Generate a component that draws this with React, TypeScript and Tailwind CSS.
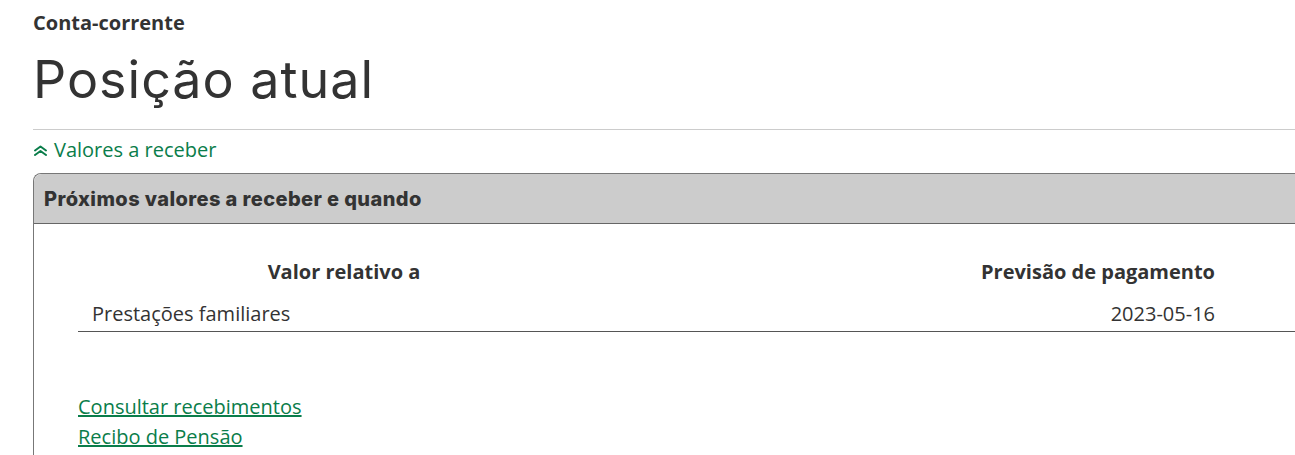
import React from 'react';

const ChevronsUpIcon: React.FC = () => (
  <svg width="15" height="11" viewBox="0 0 15 11" fill="none" stroke="currentColor" strokeWidth="2" strokeLinecap="round" strokeLinejoin="round">
    <polyline points="2,5.5 7.5,1.5 13,5.5" />
    <polyline points="2,10 7.5,6 13,10" />
  </svg>
);

const App: React.FC = () => {
  return (
    <div className="w-full h-[455px] overflow-hidden bg-white text-[#333] font-['Open_Sans',sans-serif]">
      <div className="w-[1340px] pl-[33px]">
        <p className="pt-[9px] text-[20px] leading-[27px] font-bold text-[#333]">Conta-corrente</p>
        <h1 className="mt-[13px] text-[52px] leading-[62px] font-['Inter',sans-serif] font-normal tracking-[1px] text-[#333]">
          Posição atual
        </h1>
        <div className="mt-[18px] border-t border-[#cccccc]" />
        <a href="#" className="mt-[6px] flex items-center gap-[6px] text-[20px] leading-[28px] text-[#0a7d4a]">
          <ChevronsUpIcon />
          <span>Valores a receber</span>
        </a>
        <section className="mt-[9px] rounded-tl-[8px] border-l border-t border-[#777] h-[300px]">
          <div className="h-[50px] flex items-center px-[10px] bg-[#cccccc] border-b border-[#666] rounded-tl-[8px]">
            <h2 className="text-[20px] font-extrabold font-['Inter',sans-serif] tracking-[0.4px] text-[#333]">Próximos valores a receber e quando</h2>
          </div>
          <div className="pl-[44px] pt-[34px]">
            <table className="w-[1300px] border-collapse text-[20px]">
              <thead>
                <tr>
                  <th className="w-[532px] font-bold text-center pb-[14px] leading-[28px]">Valor relativo a</th>
                  <th className="w-[619px] font-bold text-right pr-[14px] pb-[14px] leading-[28px]">Previsão de pagamento</th>
                  <th></th>
                </tr>
              </thead>
              <tbody>
                <tr className="border-b border-[#555]">
                  <td className="pl-[14px] pb-[3px] leading-[28px]">Prestações familiares</td>
                  <td className="pr-[14px] text-right pb-[3px] leading-[28px]">2023-05-16</td>
                  <td></td>
                </tr>
              </tbody>
            </table>
            <div className="mt-[60px] flex flex-col text-[20px] leading-[30px]">
              <a href="#" className="text-[#0a7d4a] underline w-fit">Consultar recebimentos</a>
              <a href="#" className="text-[#0a7d4a] underline w-fit">Recibo de Pensão</a>
            </div>
          </div>
        </section>
      </div>
    </div>
  );
};

export default App;
